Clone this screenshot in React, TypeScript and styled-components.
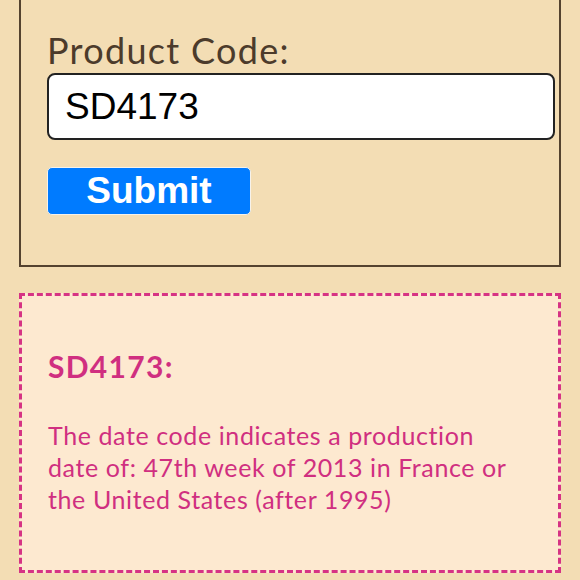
import React from "react";
import styled, { createGlobalStyle } from "styled-components";

const Global = createGlobalStyle`
  html, body { margin: 0; padding: 0; background: #f3ddb4; }
  body { font-family: Lato, "Noto Sans", sans-serif; overflow: hidden; }
`;

const Page = styled.div`
  width: 580px;
  height: 580px;
  padding: 0 19px;
  box-sizing: border-box;
  display: flex;
  flex-direction: column;
  gap: 26px;
`;

const FormCard = styled.div`
  margin-top: -20px;
  border: 2px solid #54422f;
  padding: 46px 7px 50px 26px;
  display: flex;
  flex-direction: column;
  align-items: flex-start;
`;

const Label = styled.label`
  font-family: Lato, sans-serif;
  font-size: 36px;
  line-height: 44px;
  letter-spacing: 1.3px;
  color: #4c3b2b;
  margin-bottom: 1px;
`;

const Input = styled.input`
  box-sizing: border-box;
  width: 508px;
  height: 67px;
  border: 2px solid #222;
  border-radius: 8px;
  background: #fff;
  padding: 0 16px;
  font-family: "Liberation Sans", Arial, sans-serif;
  font-size: 37px;
  color: #000;
  outline: none;
`;

const Button = styled.button`
  margin-top: 27px;
  box-sizing: border-box;
  width: 204px;
  height: 48px;
  background: #007bff;
  border: 1px solid #f7f2ea;
  border-radius: 5px;
  color: #fff;
  font-family: "Liberation Sans", Arial, sans-serif;
  font-weight: 700;
  font-size: 37px;
  line-height: 44px;
  padding: 0;
`;

const ResultCard = styled.div`
  border: 3px dashed #d63384;
  background: #fde9d0;
  padding: 52px 44px 55px 26px;
  color: #d02f80;
  font-family: Lato, sans-serif;
`;

const Heading = styled.h2`
  margin: 0 0 35px;
  font-size: 30px;
  line-height: 36px;
  font-weight: 700;
  letter-spacing: 1.3px;
`;

const Text = styled.p`
  margin: 0;
  font-size: 25px;
  line-height: 32px;
  letter-spacing: 0.6px;
`;

export default function App() {
  return (
    <>
      <Global />
      <Page>
        <FormCard>
          <Label htmlFor="code">Product Code:</Label>
          <Input id="code" defaultValue="SD4173" />
          <Button>Submit</Button>
        </FormCard>
        <ResultCard>
          <Heading>SD4173:</Heading>
          <Text>
            The date code indicates a production date of: 47th week of 2013 in France or the United States (after 1995)
          </Text>
        </ResultCard>
      </Page>
    </>
  );
}
